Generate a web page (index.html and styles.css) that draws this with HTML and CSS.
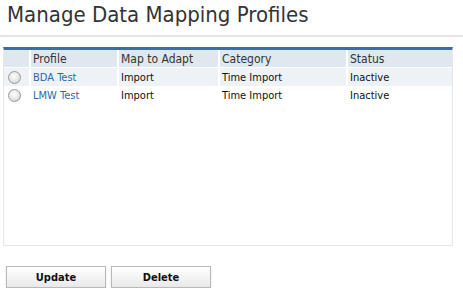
FILE: index.html
```html
<!doctype html>
<html lang="en">
    <head>
        <meta charset="UTF-8" />
        <title>Manage Data Mapping Profiles</title>
        <link rel="stylesheet" href="styles.css">
    </head>
    <body>
        <h1 class="page-title">Manage Data Mapping Profiles</h1>

        <div class="grid-panel">
            <table class="profile-grid">
                <colgroup>
                    <col class="col-select">
                    <col class="col-profile">
                    <col class="col-map">
                    <col class="col-category">
                    <col class="col-status">
                </colgroup>
                <thead>
                    <tr>
                        <th></th>
                        <th>Profile</th>
                        <th>Map to Adapt</th>
                        <th>Category</th>
                        <th>Status</th>
                    </tr>
                </thead>
                <tbody>
                    <tr class="alt">
                        <td><span class="radio"></span></td>
                        <td><a href="#">BDA Test</a></td>
                        <td>Import</td>
                        <td>Time Import</td>
                        <td>Inactive</td>
                    </tr>
                    <tr>
                        <td><span class="radio"></span></td>
                        <td><a href="#">LMW Test</a></td>
                        <td>Import</td>
                        <td>Time Import</td>
                        <td>Inactive</td>
                    </tr>
                </tbody>
            </table>
        </div>

        <div class="actions">
            <button class="btn">Update</button>
            <button class="btn">Delete</button>
        </div>
    </body>
</html>
```

FILE: styles.css
```css
:root {
    --title-color: #333333;
    --link-color: #2a67ad;
    --header-bg: #dfe7ef;
    --alt-bg: #eef2f6;
    --bar-color: #3c6da3;
}

body {
    font-family: "DejaVu Sans Condensed", "DejaVu Sans", Verdana, sans-serif;
    margin: 0;
    padding: 0;
    background: white;
    color: #111;
}

.page-title {
    font-size: 22px;
    font-weight: normal;
    color: var(--title-color);
    margin: 0;
    padding: 2px 7px 0;
    height: 33px;
    line-height: 26px;
    border-bottom: 2px solid #e4e4e4;
}

.grid-panel {
    margin: 10px 0 0 3px;
    width: 448px;
    height: 195px;
    border: 1px solid #e6e6e6;
    border-top: 3px solid var(--bar-color);
}

.profile-grid {
    width: 100%;
    table-layout: fixed;
    border-collapse: separate;
    border-spacing: 0;
    font-size: 11px;
}

.col-select { width: 27px; }
.col-profile { width: 88px; }
.col-map { width: 101px; }
.col-category { width: 128px; }

.profile-grid th {
    background: var(--header-bg);
    border-right: 2px solid white;
    border-bottom: 1px solid white;
    height: 17px;
    padding: 0 0 0 2px;
    text-align: left;
    font-weight: normal;
    font-size: 12px;
    color: #333;
}

.profile-grid th:last-child,
.profile-grid td:last-child {
    border-right: 0;
}

.profile-grid td {
    height: 17px;
    padding: 1px 0 0 2px;
    border-right: 2px solid white;
    white-space: nowrap;
}

.profile-grid tr.alt td {
    background: var(--alt-bg);
}

.profile-grid a {
    color: var(--link-color);
    text-decoration: none;
}

.radio {
    display: block;
    width: 11px;
    height: 11px;
    margin-left: 2px;
    border: 1px solid #9a9a9a;
    border-radius: 50%;
    background: radial-gradient(circle at 45% 40%, #ffffff 0, #e4e4e4 55%, #c8c8c8 100%);
}

.actions {
    display: flex;
    gap: 5px;
    margin: 20px 0 0 6px;
}

.btn {
    width: 100px;
    height: 22px;
    font-family: inherit;
    font-size: 11px;
    font-weight: bold;
    color: #111;
    border: 1px solid #b9b9b9;
    background: linear-gradient(#ffffff, #e9e9e9);
    box-shadow: 0 2px 2px rgba(0, 0, 0, 0.12);
    padding: 0;
}
```
